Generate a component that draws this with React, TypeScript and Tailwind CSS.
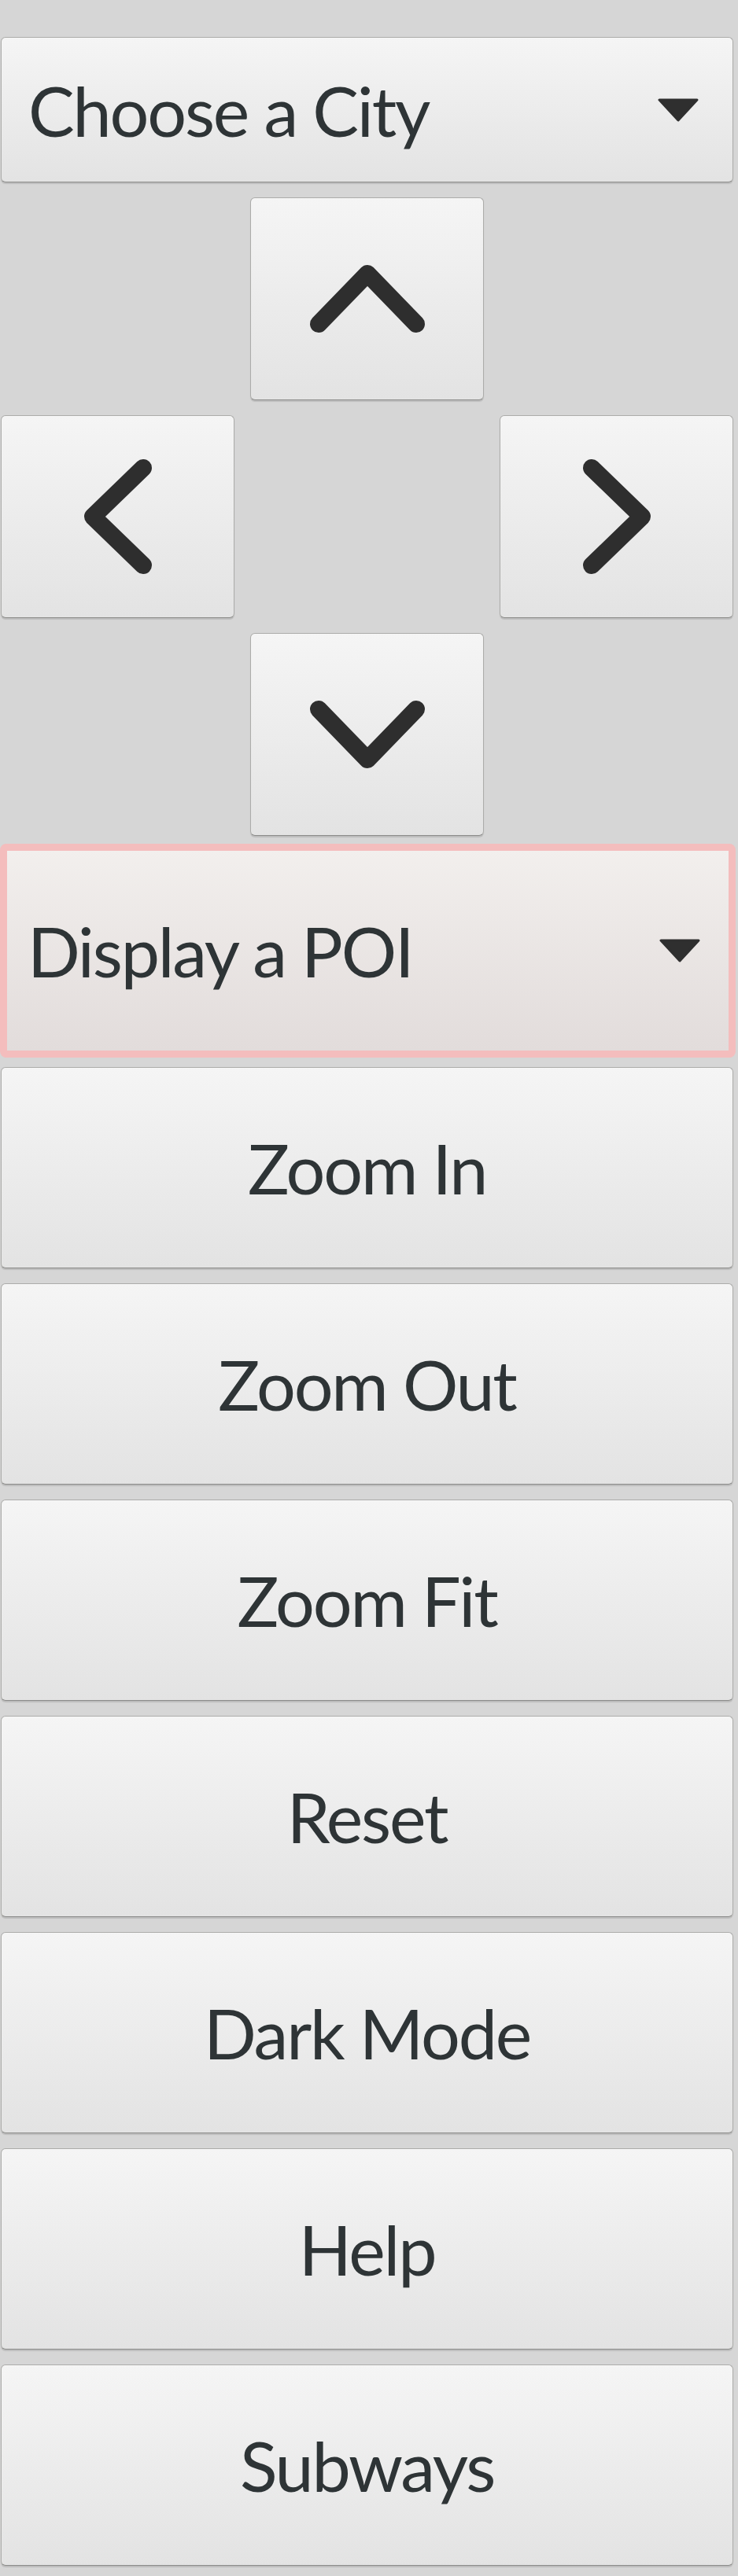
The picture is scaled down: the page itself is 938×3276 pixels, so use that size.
import React from "react";

function Caret() {
  return (
    <svg width="52" height="30" viewBox="0 0 52 30" className="shrink-0">
      <polygon points="2,2 50,2 26,28" fill="#2f2f2f" stroke="#2f2f2f" strokeWidth={3} strokeLinejoin="round" />
    </svg>
  );
}

function Chevron({ dir }: { dir: "up" | "down" | "left" | "right" }) {
  const vertical = dir === "up" || dir === "down";
  const w = vertical ? 146 : 86;
  const h = vertical ? 86 : 146;
  const d = {
    up: "M11 75 L73 11 L135 75",
    down: "M11 11 L73 75 L135 11",
    left: "M75 11 L11 73 L75 135",
    right: "M11 11 L75 73 L11 135",
  }[dir];
  return (
    <svg width={w} height={h} viewBox={`0 0 ${w} ${h}`}>
      <path d={d} fill="none" stroke="#2e2e2e" strokeWidth={22} strokeLinecap="round" strokeLinejoin="round" />
    </svg>
  );
}

const btn =
  "flex items-center justify-center rounded-[6px] border border-[#acacaa] border-b-[#8c8c8a] bg-linear-to-b from-[#f5f5f5] to-[#e3e3e3] shadow-[0_2px_1px_rgba(0,0,0,0.12)]";

export default function App() {
  const actions = ["Zoom In", "Zoom Out", "Zoom Fit", "Reset", "Dark Mode", "Help", "Subways"];

  return (
    <div className="min-h-screen bg-[#d6d6d6] font-['Lato',sans-serif] text-[88px] leading-none tracking-[-0.025em] text-[#2e3436]">
      <div className="flex w-[932px] flex-col pt-[47px] pl-px">
        {/* city picker */}
        <div className={`${btn} h-[185px] justify-between! pl-[34px] pr-[43px]`}>
          <span>Choose a City</span>
          <Caret />
        </div>

        {/* pan pad */}
        <div className="mt-[19px] grid grid-cols-[297px_297px_297px] grid-rows-[258px_258px_258px] gap-x-[20px] gap-y-[19px]">
          <div className={`${btn} col-start-2 row-start-1`}>
            <Chevron dir="up" />
          </div>
          <div className={`${btn} col-start-1 row-start-2`}>
            <Chevron dir="left" />
          </div>
          <div className={`${btn} col-start-3 row-start-2`}>
            <Chevron dir="right" />
          </div>
          <div className={`${btn} col-start-2 row-start-3`}>
            <Chevron dir="down" />
          </div>
        </div>

        {/* poi picker, focused */}
        <div className="-ml-px mt-[10px] flex h-[272px] w-[935px] items-center justify-between rounded-[8px] border-[9px] border-[#f4bdbd] bg-linear-to-b from-[#f2efed] to-[#e2dcdb] pl-[26px] pr-[36px]">
          <span>Display a POI</span>
          <Caret />
        </div>

        <div className="mt-[12px] flex flex-col gap-[19px]">
          {actions.map((a) => (
            <div key={a} className={`${btn} h-[256px]`}>
              {a}
            </div>
          ))}
        </div>
      </div>
    </div>
  );
}
